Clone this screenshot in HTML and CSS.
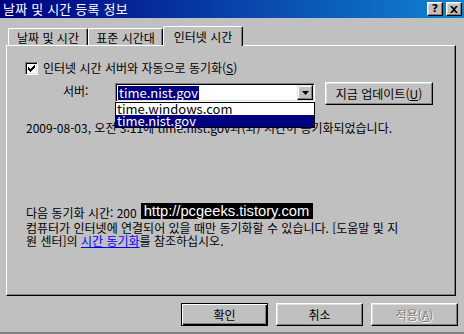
FILE: index.html
```html
<!DOCTYPE html>
<html lang="ko">
<head>
    <meta charset="UTF-8">
    <title>날짜 및 시간 등록 정보</title>
    <link rel="stylesheet" href="styles.css">
</head>
<body>
    <div class="window">
        <div class="titlebar">
            <span class="title">날짜 및 시간 등록 정보</span>
            <div class="title-btns">
                <span class="tbtn help">?</span>
                <span class="tbtn close">
                    <svg width="8" height="7" viewBox="0 0 8 7"><path d="M0 0h2l2 2 2-2h2L5 3.5 8 7H6L4 5 2 7H0l3-3.5z" fill="#000"/></svg>
                </span>
            </div>
        </div>

        <div class="tabs">
            <div class="tab tab-first">날짜 및 시간</div>
            <div class="tab tab-second">표준 시간대</div>
            <div class="tab active">인터넷 시간</div>
        </div>

        <div class="panel">
            <label class="check-row">
                <span class="checkbox">
                    <svg width="9" height="9" viewBox="0 0 7 7"><path d="M0 2h1v1h1v1h1V3h1V2h1V1h1V0h1v3H6v1H5v1H4v1H3v1H2V6H1V5H0z" fill="#000"/></svg>
                </span>
                <span>인터넷 시간 서버와 자동으로 동기화(<u>S</u>)</span>
            </label>

            <div class="server-row">
                <span class="server-label">서버:</span>
                <div class="combo">
                    <div class="combo-field">
                        <span class="sel">time.nist.gov</span>
                    </div>
                    <span class="combo-arrow">
                        <svg width="7" height="4" viewBox="0 0 7 4"><path d="M0 0h7L3.5 4z" fill="#000"/></svg>
                    </span>
                    <ul class="combo-list">
                        <li>time.windows.com</li>
                        <li class="hl">time.nist.gov</li>
                    </ul>
                </div>
                <button class="btn update-btn">지금 업데이트(<u>U</u>)</button>
            </div>

            <p class="status">2009-08-03, 오전 3:11에 time.nist.gov과(와) 시간이 동기화되었습니다.</p>

            <div class="next-sync">
                <span>다음 동기화 시간: 200</span>
                <span class="watermark">http://pcgeeks.tistory.com</span>
            </div>
            <p class="note">컴퓨터가 인터넷에 연결되어 있을 때만 동기화할 수 있습니다. [도움말 및 지<br>원 센터]의 <a href="#">시간 동기화</a>를 참조하십시오.</p>
        </div>

        <div class="actions">
            <button class="btn default">확인</button>
            <button class="btn">취소</button>
            <button class="btn disabled" disabled>적용(<u>A</u>)</button>
        </div>
    </div>
</body>
</html>
```

FILE: styles.css
```css
body {
    margin: 0;
    padding: 0;
    background-color: #c0c0c0;
    font-family: "Noto Sans CJK KR", "DejaVu Sans", sans-serif;
    font-size: 12px;
    line-height: 14px;
    color: #000;
}

.window {
    width: 464px;
    height: 334px;
    background-color: #c0c0c0;
    border-bottom: 2px solid #808080;
    box-sizing: border-box;
    overflow: hidden;
}

.titlebar {
    height: 18px;
    display: flex;
    align-items: center;
    justify-content: space-between;
    background: linear-gradient(to right, #000080, #1084d0);
    color: white;
    padding: 0 2px 0 3px;
}

.title {
    font-size: 13px;
    letter-spacing: 0.2px;
}

.title-btns {
    display: flex;
    gap: 3px;
}

.tbtn {
    width: 16px;
    height: 14px;
    box-sizing: border-box;
    background-color: #c0c0c0;
    border: 1px solid;
    border-color: #fff #000 #000 #fff;
    box-shadow: inset -1px -1px #808080, inset 1px 1px #dfdfdf;
    display: flex;
    align-items: center;
    justify-content: center;
    color: #000;
    font-family: "DejaVu Sans", sans-serif;
    font-weight: bold;
    font-size: 11px;
    line-height: 12px;
}

.tabs {
    display: flex;
    align-items: flex-end;
    margin: 8px 0 0 8px;
    height: 19px;
}

.tab {
    height: 17px;
    box-sizing: border-box;
    display: flex;
    align-items: center;
    justify-content: center;
    border-top: 1px solid #fff;
    border-left: 1px solid #fff;
    border-right: 1px solid #000;
    border-radius: 2px 2px 0 0;
    box-shadow: inset -1px 0 #808080;
    padding-top: 1px;
}

.tab-first {
    width: 80px;
}

.tab-second {
    width: 75px;
}

.tab.active {
    width: 80px;
    height: 20px;
    margin-bottom: -1px;
    background-color: #c0c0c0;
    position: relative;
    z-index: 1;
    padding-top: 0;
}

.panel {
    margin-left: 6px;
    width: 450px;
    height: 251px;
    box-sizing: border-box;
    border: 1px solid;
    border-color: #fff #000 #000 #fff;
    box-shadow: inset -1px -1px #808080;
    padding: 15px 0 0 18px;
}

.check-row {
    display: flex;
    align-items: center;
    gap: 5px;
    height: 14px;
}

.checkbox {
    width: 13px;
    height: 13px;
    box-sizing: border-box;
    background-color: #fff;
    border: 1px solid;
    border-color: #808080 #fff #fff #808080;
    box-shadow: inset 1px 1px #000, inset -1px -1px #dfdfdf;
    display: flex;
    align-items: center;
    justify-content: center;
}

.checkbox svg {
    width: 7px;
    height: 7px;
}

.server-row {
    display: flex;
    align-items: flex-start;
    margin-top: 7px;
    height: 23px;
}

.server-label {
    width: 52px;
    margin: 2px 0 0 38px;
}

.combo {
    position: relative;
    width: 200px;
    height: 19px;
    margin-top: 1px;
    box-sizing: border-box;
    border: 1px solid;
    border-color: #808080 #fff #fff #808080;
    box-shadow: inset 1px 1px #000, inset -1px -1px #dfdfdf;
    background-color: #fff;
    display: flex;
    padding: 1px;
}

.combo-field {
    flex: 1;
    padding: 1px 0 0 1px;
}

.sel {
    display: inline-block;
    background-color: #000080;
    color: #fff;
    padding: 0 1px;
    font-size: 13px;
    line-height: 14px;
}

.combo-arrow {
    width: 16px;
    height: 15px;
    box-sizing: border-box;
    background-color: #c0c0c0;
    border: 1px solid;
    border-color: #dfdfdf #000 #000 #dfdfdf;
    box-shadow: inset -1px -1px #808080, inset 1px 1px #fff;
    display: flex;
    align-items: center;
    justify-content: center;
}

.combo-list {
    position: absolute;
    top: 18px;
    left: -1px;
    width: 200px;
    box-sizing: border-box;
    margin: 0;
    padding: 0;
    list-style: none;
    background-color: #fff;
    border: 1px solid #000;
    z-index: 2;
    font-size: 13px;
}

.combo-list li {
    height: 12px;
    line-height: 12px;
    padding-left: 1px;
}

.combo-list li.hl {
    background-color: #000080;
    color: #fff;
}

.btn {
    font-family: inherit;
    font-size: 12px;
    background-color: #c0c0c0;
    color: #000;
    border: 1px solid;
    border-color: #fff #000 #000 #fff;
    box-shadow: inset -1px -1px #808080, inset 1px 1px #dfdfdf;
    padding: 0;
    cursor: pointer;
}

.update-btn {
    width: 108px;
    height: 23px;
    margin-left: 10px;
}

.status {
    margin: 16px 0 0 1px;
}

.next-sync {
    display: flex;
    align-items: center;
    height: 16px;
    margin: 70px 0 0 1px;
}

.watermark {
    height: 16px;
    width: 172px;
    margin-left: 4px;
    background-color: #000;
    color: #fff;
    font-family: "Liberation Sans", Arial, sans-serif;
    font-size: 14.7px;
    line-height: 16px;
    padding-left: 3px;
    box-sizing: border-box;
    margin-top: -5px;
    white-space: nowrap;
    overflow: hidden;
}

.note {
    margin: 0 0 0 1px;
    line-height: 13px;
}

.note a {
    color: #0000ff;
}

.actions {
    display: flex;
    justify-content: flex-end;
    gap: 8px;
    margin: 7px 6px 0 0;
}

.actions .btn {
    width: 87px;
    height: 23px;
}

.btn.default {
    border: 1px solid #000;
    box-shadow: inset 1px 1px #fff, inset -1px -1px #000, inset -2px -2px #808080;
}

.btn.disabled {
    color: #808080;
    text-shadow: 1px 1px #fff;
    cursor: default;
}
```
